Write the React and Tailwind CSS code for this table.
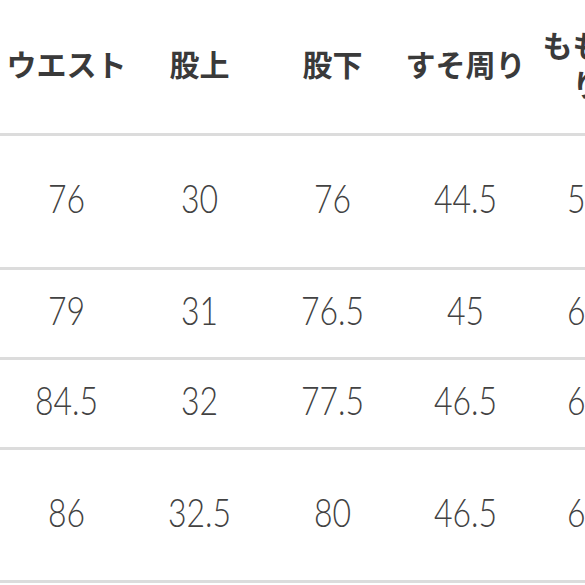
const headers = ['ウエスト', '股上', '股下', 'すそ周り', 'もも周り']

const rows = [
  { h: 'h-[134px]', v: ['76', '30', '76', '44.5', '55.5'] },
  { h: 'h-[90px]', v: ['79', '31', '76.5', '45', '60.5'] },
  { h: 'h-[90px]', v: ['84.5', '32', '77.5', '46.5', '62.5'] },
  { h: 'h-[133px]', v: ['86', '32.5', '80', '46.5', '64.5'] },
]

export default function App() {
  return (
    <div className="h-[585px] w-[585px] overflow-hidden bg-white">
      <div className="w-[665px]">
        <div className="grid h-[136px] grid-cols-[repeat(5,133px)] items-center border-b-[3px] border-[#dcdcdc] pb-[6px] font-['Noto_Sans_CJK_JP',sans-serif] text-[30px] font-bold leading-[39px] text-[#3a3a3a]">
          {headers.map((t, i) => (
            <div key={t} className="flex justify-center">
              <span className={i === 4 ? 'mr-[22px] w-[92px] text-center' : 'text-center'}>{t}</span>
            </div>
          ))}
        </div>
        {rows.map((r, ri) => (
          <div
            key={ri}
            className={`grid ${r.h} grid-cols-[repeat(5,133px)] items-center border-b-[3px] border-[#dcdcdc] pb-[6px] font-['Lato','Noto_Sans',sans-serif] text-[39px] font-light text-[#424242]`}
          >
            {r.v.map((v, i) => (
              <div key={i} className="flex justify-center">
                <span className="inline-block scale-x-[0.82]">{v}</span>
              </div>
            ))}
          </div>
        ))}
      </div>
    </div>
  )
}
